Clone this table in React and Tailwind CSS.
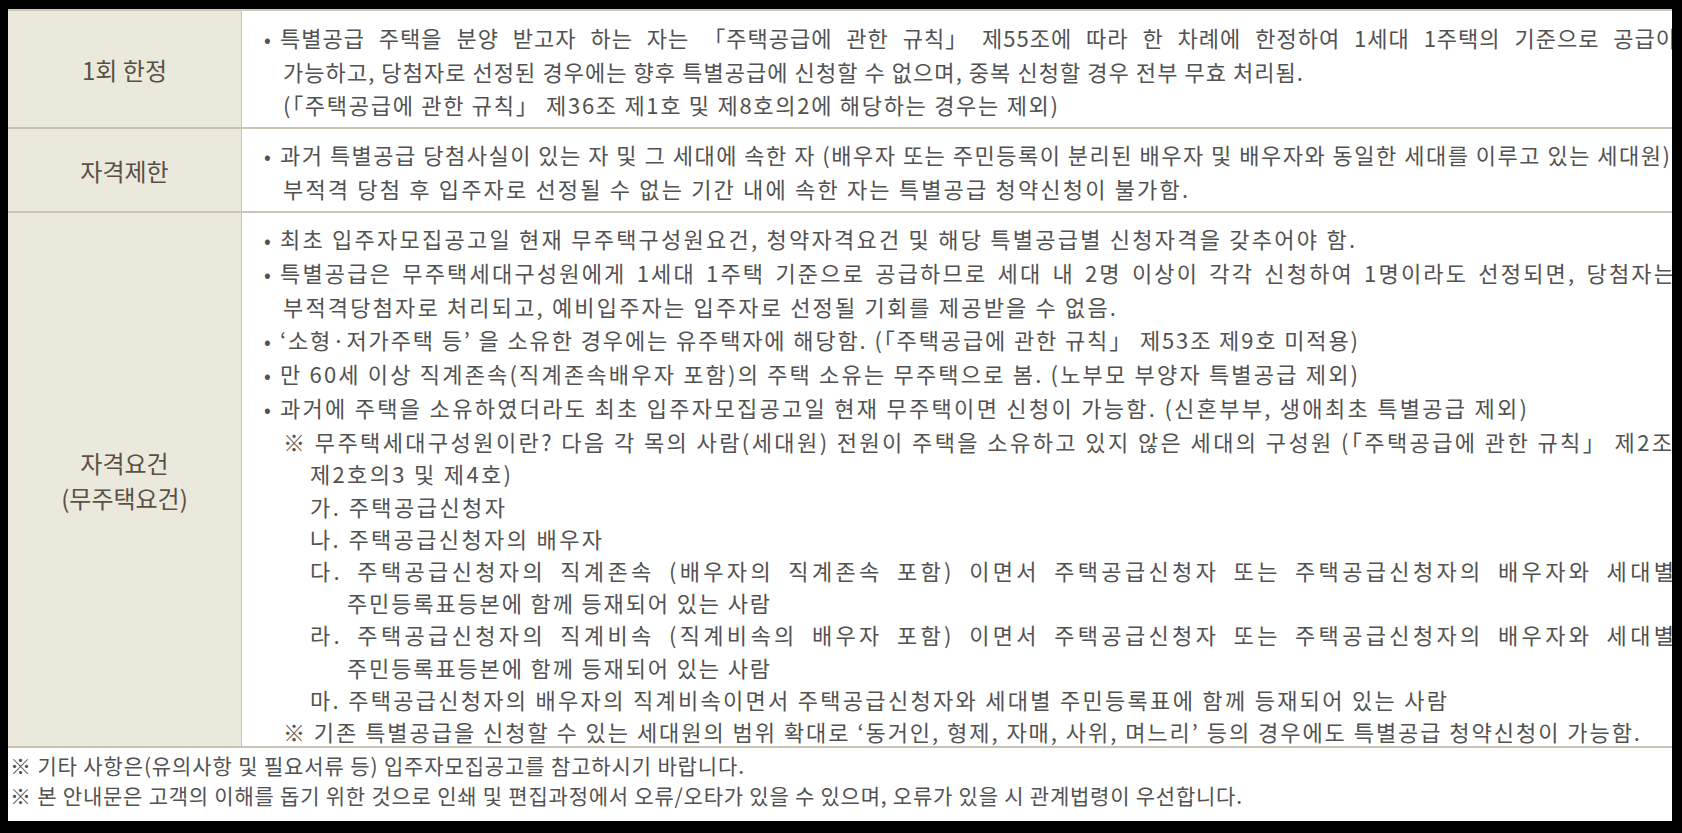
import React, { useLayoutEffect, useRef } from 'react';

const FONT = { fontFamily: '"Noto Sans CJK KR", "Noto Sans", sans-serif' };

// end = x (page px) where the last glyph of the line ends in the original layout
// ws = fixed extra word gap, the rest is spread between the letters
const row1 = [
  { t: '특별공급 주택을 분양 받고자 하는 자는 「주택공급에 관한 규칙」 제55조에 따라 한 차례에 한정하여 1세대 1주택의 기준으로 공급이', b: true, end: 1676, ws: 8 },
  { t: '가능하고, 당첨자로 선정된 경우에는 향후 특별공급에 신청할 수 없으며, 중복 신청할 경우 전부 무효 처리됨.', end: 1303 },
  { t: '(「주택공급에 관한 규칙」 제36조 제1호 및 제8호의2에 해당하는 경우는 제외)', end: 1058 },
];

const row2 = [
  { t: '과거 특별공급 당첨사실이 있는 자 및 그 세대에 속한 자 (배우자 또는 주민등록이 분리된 배우자 및 배우자와 동일한 세대를 이루고 있는 세대원)', b: true, end: 1670 },
  { t: '부적격 당첨 후 입주자로 선정될 수 없는 기간 내에 속한 자는 특별공급 청약신청이 불가함.', end: 1188 },
];

const row3 = [
  { t: '최초 입주자모집공고일 현재 무주택구성원요건, 청약자격요건 및 해당 특별공급별 신청자격을 갖추어야 함.', b: true, end: 1355 },
  { t: '특별공급은 무주택세대구성원에게 1세대 1주택 기준으로 공급하므로 세대 내 2명 이상이 각각 신청하여 1명이라도 선정되면, 당첨자는', b: true, end: 1674, ws: 3 },
  { t: '부적격당첨자로 처리되고, 예비입주자는 입주자로 선정될 기회를 제공받을 수 없음.', end: 1116 },
  { t: '‘소형·저가주택 등’ 을 소유한 경우에는 유주택자에 해당함. (「주택공급에 관한 규칙」 제53조 제9호 미적용)', b: true, end: 1358 },
  { t: '만 60세 이상 직계존속(직계존속배우자 포함)의 주택 소유는 무주택으로 봄. (노부모 부양자 특별공급 제외)', b: true, end: 1358 },
  { t: '과거에 주택을 소유하였더라도 최초 입주자모집공고일 현재 무주택이면 신청이 가능함. (신혼부부, 생애최초 특별공급 제외)', b: true, end: 1527 },
  { t: '※ 무주택세대구성원이란? 다음 각 목의 사람(세대원) 전원이 주택을 소유하고 있지 않은 세대의 구성원 (「주택공급에 관한 규칙」 제2조', end: 1672 },
  { t: '제2호의3 및 제4호)', i: 1, end: 511 },
  { t: '가. 주택공급신청자', i: 1, end: 505 },
  { t: '나. 주택공급신청자의 배우자', i: 1, end: 602 },
  { t: '다. 주택공급신청자의 직계존속 (배우자의 직계존속 포함) 이면서 주택공급신청자 또는 주택공급신청자의 배우자와 세대별', i: 1, end: 1674, ws: 6 },
  { t: '주민등록표등본에 함께 등재되어 있는 사람', i: 2, end: 770 },
  { t: '라. 주택공급신청자의 직계비속 (직계비속의 배우자 포함) 이면서 주택공급신청자 또는 주택공급신청자의 배우자와 세대별', i: 1, end: 1674, ws: 6 },
  { t: '주민등록표등본에 함께 등재되어 있는 사람', i: 2, end: 770 },
  { t: '마. 주택공급신청자의 배우자의 직계비속이면서 주택공급신청자와 세대별 주민등록표에 함께 등재되어 있는 사람', i: 1, end: 1447 },
  { t: '※ 기존 특별공급을 신청할 수 있는 세대원의 범위 확대로 ‘동거인, 형제, 자매, 사위, 며느리’ 등의 경우에도 특별공급 청약신청이 가능함.', end: 1640 },
];

const notes = [
  { t: '※ 기타 사항은(유의사항 및 필요서류 등) 입주자모집공고를 참고하시기 바랍니다.', end: 744 },
  { t: '※ 본 안내문은 고객의 이해를 돕기 위한 것으로 인쇄 및 편집과정에서 오류/오타가 있을 수 있으며, 오류가 있을 시 관계법령이 우선합니다.', end: 1242 },
];

// stretches a line so its last glyph lands where it does in the printed sheet
function FitText({ text, end, ws = 0 }) {
  const ref = useRef(null);
  useLayoutEffect(() => {
    const el = ref.current;
    const fit = () => {
      el.style.letterSpacing = '0px';
      el.style.wordSpacing = `${ws}px`;
      const r = el.getBoundingClientRect();
      const n = [...text].length - 1;
      if (n > 0) el.style.letterSpacing = `${(end - r.left - r.width) / n}px`;
    };
    fit();
    if (document.fonts) document.fonts.ready.then(fit);
  }, [text, end, ws]);
  return (
    <span ref={ref} className="inline-block whitespace-pre">
      {text}
    </span>
  );
}

function Line({ line }) {
  const pad = line.b ? 'pl-[22px]' : line.i === 1 ? 'pl-[68px]' : line.i === 2 ? 'pl-[105px]' : 'pl-[41px]';
  return (
    <div className={`whitespace-pre ${pad}`}>
      {line.b && <span className="inline-block w-[16px] text-[20px]">•</span>}
      <FitText text={line.t} end={line.end} ws={line.ws} />
    </div>
  );
}

function Row({ label, lines, className, bodyClass }) {
  return (
    <div className={`flex border-b-2 border-[#cbc4b4] ${className}`}>
      <div className="w-[234px] shrink-0 bg-[#ebe8dc] border-r border-[#c9c2b2] flex flex-col items-center justify-center text-[24px] leading-[35px] text-[#5a5046]">
        {label.map((l) => (
          <div key={l}>{l}</div>
        ))}
      </div>
      <div className={`flex-1 min-w-0 overflow-hidden text-[22px] text-[#525252] ${bodyClass}`}>
        {lines.map((l, i) => (
          <Line key={i} line={l} />
        ))}
      </div>
    </div>
  );
}

export default function App() {
  return (
    <div className="w-[1682px] h-[833px] bg-black pt-[9px] pl-[8px] pr-[10px] pb-[12px]" style={FONT}>
      <div className="h-full bg-white overflow-hidden flex flex-col border-t-2 border-[#cfcac0]">
        <Row label={['1회 한정']} lines={row1} className="h-[118px]" bodyClass="pt-[10px] leading-[33px]" />
        <Row label={['자격제한']} lines={row2} className="h-[84px]" bodyClass="pt-[9px] leading-[32px]" />
        <Row label={['자격요건', '(무주택요건)']} lines={row3} className="h-[535px]" bodyClass="pt-[9px] leading-[32.2px]" />
        <div className="pt-[2px] pl-[2px] text-[21px] leading-[30px] text-[#525252]">
          {notes.map((n, i) => (
            <div key={i}>
              <FitText text={n.t} end={n.end} />
            </div>
          ))}
        </div>
      </div>
    </div>
  );
}
